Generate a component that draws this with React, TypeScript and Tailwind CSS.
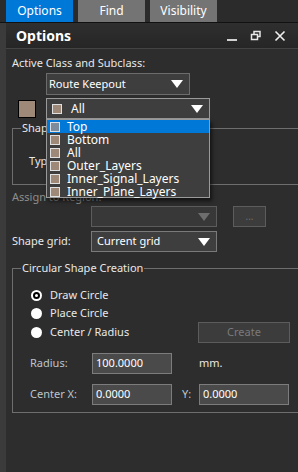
import { useState } from 'react'

const layers = ['Top', 'Bottom', 'All', 'Outer_Layers', 'Inner_Signal_Layers', 'Inner_Plane_Layers']

function Arrow({ dim }: { dim?: boolean }) {
  return (
    <svg width="12" height="8" viewBox="0 0 12 8">
      <path d="M0 0 L12 0 L6 8 Z" fill={dim ? '#6e6e6e' : '#ffffff'} />
    </svg>
  )
}

function Radio({ checked }: { checked?: boolean }) {
  return (
    <div className="w-[11px] h-[11px] rounded-full bg-white flex items-center justify-center">
      {checked && <div className="w-[7px] h-[7px] rounded-full border-2 border-black bg-white" />}
    </div>
  )
}

export default function App() {
  const [tab, setTab] = useState('Options')

  return (
    <div className="w-[298px] h-[472px] bg-[#2d2d2d] flex flex-col overflow-hidden text-[11px] text-[#e8e8e8] font-['Noto_Sans',sans-serif]">
      {/* Tabs */}
      <div className="h-[22px] flex gap-[5px] pl-[6px] bg-[#2b2b2b]">
        {['Options', 'Find', 'Visibility'].map((t) => (
          <button
            key={t}
            onClick={() => setTab(t)}
            className={`w-[67px] h-[22px] flex items-center justify-center text-[12px] text-white ${tab === t ? 'bg-[#0078d7]' : 'bg-[#747474]'}`}
          >
            {t}
          </button>
        ))}
      </div>
      <div className="h-px bg-[#111111]" />

      <div className="flex flex-1">
        <div className="w-[6px] bg-[#3b3b3b]" />
        <div className="flex-1 flex flex-col relative">
          {/* Title bar */}
          <div className="h-[26px] flex items-center justify-between pl-[10px] pr-[12px] bg-gradient-to-b from-[#2f2f2f] to-[#262626] border-b border-[#434343]">
            <span className="text-[14px] font-bold text-white">Options</span>
            <div className="flex items-center gap-[12px]">
              <svg width="12" height="12" viewBox="0 0 12 12">
                <rect x="1" y="9" width="10" height="2" fill="#d0d0d0" />
              </svg>
              <svg width="12" height="12" viewBox="0 0 12 12">
                <rect x="4" y="1.5" width="6" height="5" fill="none" stroke="#e8e8e8" strokeWidth="1.5" />
                <rect x="1.5" y="4.5" width="6" height="5" fill="#2a2a2a" stroke="#e8e8e8" strokeWidth="1.5" />
              </svg>
              <svg width="12" height="12" viewBox="0 0 12 12">
                <path d="M1.5 1.5 L10.5 10.5 M10.5 1.5 L1.5 10.5" stroke="#f0f0f0" strokeWidth="1.6" />
              </svg>
            </div>
          </div>

          {/* Content */}
          <div className="flex flex-col pl-[6px]">
            <div className="mt-[6px] leading-[16px]">Active Class and Subclass:</div>

            <div className="ml-[34px] mt-[2px] w-[144px] h-[22px] bg-[#3e3e3e] border border-[#6c6c6c] flex items-center justify-between pl-[2px] pr-[6px] text-white">
              <span>Route Keepout</span>
              <Arrow />
            </div>

            <div className="flex items-center mt-[3px]">
              <div className="ml-[6px] w-[18px] h-[18px] bg-[#9e8878] border border-black" />
              <div className="ml-[10px] w-[164px] h-[21px] bg-[#3e3e3e] border border-[#9a9a9a] flex items-center justify-between pl-[5px] pr-[6px] text-[12px] text-white">
                <div className="flex items-center gap-[9px]">
                  <div className="w-[10px] h-[10px] bg-[#9e8878] border border-[#e0e0e0]" />
                  <span>All</span>
                </div>
                <Arrow />
              </div>
            </div>

            {/* Shape group */}
            <div className="relative mt-[9px] h-[57px] border-l border-t border-b border-[#6e6e6e]">
              <span className="absolute -top-[9px] left-[8px] px-[1px] bg-[#2d2d2d] leading-[16px]">Shape</span>
              <span className="absolute top-[24px] left-[16px] leading-[16px]">Type:</span>
            </div>

            <div className="mt-[4px] leading-[16px] text-[#8e8e8e]">Assign to Region:</div>

            <div className="flex items-center mt-[1px]">
              <div className="ml-[79px] w-[126px] h-[21px] bg-[#383838] border border-[#5c5c5c] flex items-center justify-end pr-[6px]">
                <Arrow dim />
              </div>
              <div className="ml-[16px] w-[33px] h-[21px] bg-[#3c3c3c] border border-[#5c5c5c] flex items-center justify-center text-[#6e6e6e] text-[10px]">
                ...
              </div>
            </div>

            <div className="flex items-center mt-[4px]">
              <span className="w-[79px]">Shape grid:</span>
              <div className="w-[126px] h-[21px] bg-[#3e3e3e] border border-[#7a7a7a] flex items-center justify-between pl-[5px] pr-[6px] text-white">
                <span>Current grid</span>
                <Arrow />
              </div>
            </div>

            {/* Circular Shape Creation */}
            <div className="relative mt-[16px] h-[145px] border-l border-t border-b border-[#6e6e6e] flex flex-col">
              <span className="absolute -top-[9px] left-[8px] px-[1px] bg-[#2d2d2d] leading-[16px]">Circular Shape Creation</span>
              <div className="flex items-center gap-[8px] ml-[18px] mt-[19px] h-[14px]">
                <Radio checked />
                <span>Draw Circle</span>
              </div>
              <div className="flex items-center gap-[8px] ml-[18px] mt-[4px] h-[14px]">
                <Radio />
                <span>Place Circle</span>
              </div>
              <div className="flex items-center mt-[2px] h-[21px]">
                <div className="flex items-center gap-[8px] ml-[18px] w-[167px]">
                  <Radio />
                  <span>Center / Radius</span>
                </div>
                <div className="w-[92px] h-[21px] bg-[#3c3c3c] border border-[#5c5c5c] flex items-center justify-center text-[#7a7a7a]">
                  Create
                </div>
              </div>
              <div className="flex items-center mt-[10px] h-[21px] text-[#bcc4cc]">
                <span className="ml-[17px] w-[62px]">Radius:</span>
                <div className="w-[80px] h-[21px] bg-[#4a4a4a] border border-[#7c7c7c] flex items-center pl-[3px] text-white">100.0000</div>
                <span className="ml-[27px] text-[#e8e8e8]">mm.</span>
              </div>
              <div className="flex items-center mt-[10px] h-[21px] text-[#bcc4cc]">
                <span className="ml-[17px] w-[62px]">Center X:</span>
                <div className="w-[80px] h-[21px] bg-[#4a4a4a] border border-[#7c7c7c] flex items-center pl-[3px] text-white">0.0000</div>
                <span className="ml-[10px] w-[17px]">Y:</span>
                <div className="w-[90px] h-[21px] bg-[#4a4a4a] border border-[#7c7c7c] flex items-center pl-[3px] text-white">0.0000</div>
              </div>
            </div>
          </div>

          {/* Open layer list */}
          <div className="absolute left-[40px] top-[96px] w-[164px] h-[79px] bg-[#3e3e3e] border border-[#9a9a9a] shadow-[2px_3px_4px_rgba(0,0,0,0.6)] flex flex-col text-[12px] text-white">
            {layers.map((l, i) => (
              <div key={l} className={`h-[13px] flex items-center gap-[7px] pl-[3px] ${i === 0 ? 'bg-[#0078d7]' : ''}`}>
                <div className={`w-[10px] h-[10px] border border-[#e0e0e0] ${i === 0 ? 'bg-[#7d8c9c]' : 'bg-[#9e8878]'}`} />
                <span className="leading-[13px]">{l}</span>
              </div>
            ))}
          </div>
        </div>
      </div>
    </div>
  )
}
